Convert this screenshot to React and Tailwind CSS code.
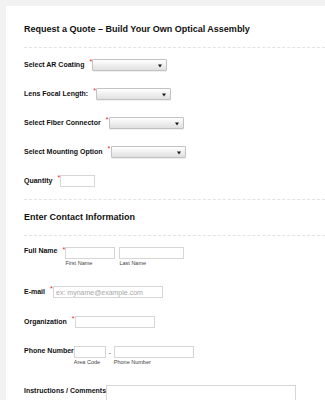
import React from "react";

const font = "font-['Liberation_Sans',Arial,sans-serif]";

function Star() {
  return (
    <span className="ml-[5px] self-start mt-[-1px] text-[7px] leading-[7px] text-[#e02020] w-[3px]">*</span>
  );
}

function Select({ w = "w-[75px]" }) {
  return (
    <div className={`${w} h-[12px] border border-[#c2c2c2] rounded-[1px] bg-gradient-to-b from-white to-[#e0e0e0] flex items-center justify-end pr-[4px] shadow-[0_1px_0_rgba(0,0,0,0.06)]`}>
      <svg width="4" height="4" viewBox="0 0 4 4" className="mt-[1px]">
        <path d="M0 0.5H4L2 3.5Z" fill="#1a1a1a" />
      </svg>
    </div>
  );
}

function Input({ w, placeholder }) {
  return (
    <div className={`${w} h-[12px] border border-[#d6d6d6] bg-white flex items-center pl-[2px]`}>
      {placeholder && (
        <span className="text-[7px] leading-[7px] text-[#a8a8a8] whitespace-nowrap">{placeholder}</span>
      )}
    </div>
  );
}

function Label({ children }) {
  return <span className="text-[7px] font-bold text-[#111] whitespace-nowrap leading-[12px]">{children}</span>;
}

function Divider() {
  return <div className="border-t border-dashed border-[#e2e2e2]" />;
}

export default function App() {
  return (
    <div className={`h-screen overflow-hidden bg-[#f2f2f2] pt-[6px] pl-[6px] ${font}`}>
      <div className="bg-white h-full pt-[17px] pl-[18px] overflow-hidden">
        <h1 className="text-[9px] font-bold leading-[12px] h-[12px] text-[#111] whitespace-nowrap">
          Request a Quote – Build Your Own Optical Assembly
        </h1>
        <div className="mt-[12px]">
          <Divider />
        </div>

        <div className="mt-[11px] flex flex-col gap-[17px]">
          <div className="flex items-center h-[12px]">
            <Label>Select AR Coating</Label>
            <Star />
            <Select />
          </div>
          <div className="flex items-center h-[12px]">
            <Label>Lens Focal Length:</Label>
            <Star />
            <Select />
          </div>
          <div className="flex items-center h-[12px]">
            <Label>Select Fiber Connector</Label>
            <Star />
            <Select />
          </div>
          <div className="flex items-center h-[12px]">
            <Label>Select Mounting Option</Label>
            <Star />
            <Select />
          </div>
          <div className="flex items-center h-[12px]">
            <Label>Quantity</Label>
            <Star />
            <Input w="w-[35px]" />
          </div>
        </div>

        <div className="mt-[12px]">
          <Divider />
        </div>
        <h2 className="mt-[11px] text-[9px] font-bold leading-[12px] h-[12px] text-[#111] whitespace-nowrap">
          Enter Contact Information
        </h2>
        <div className="mt-[12px]">
          <Divider />
        </div>

        <div className="mt-[11px] flex items-start">
          <span className="text-[7px] font-bold text-[#111] whitespace-nowrap leading-[8px]">Full Name</span>
          <Star />
          <div className="flex gap-[4px]">
            <div className="flex flex-col">
              <Input w="w-[50px]" />
              <span className="text-[5.5px] leading-[8px] text-[#444]">First Name</span>
            </div>
            <div className="flex flex-col">
              <Input w="w-[65px]" />
              <span className="text-[5.5px] leading-[8px] text-[#444]">Last Name</span>
            </div>
          </div>
        </div>

        <div className="mt-[19px] flex items-center h-[12px]">
          <Label>E-mail</Label>
          <Star />
          <Input w="w-[110px]" placeholder="ex: myname@example.com" />
        </div>

        <div className="mt-[18px] flex items-center h-[12px]">
          <Label>Organization</Label>
          <Star />
          <Input w="w-[80px]" />
        </div>

        <div className="mt-[18px] flex items-start">
          <span className="text-[7px] font-bold text-[#111] whitespace-nowrap leading-[9px]">Phone Number</span>
          <div className="flex items-start">
            <div className="flex flex-col">
              <Input w="w-[32px]" />
              <span className="text-[5.5px] leading-[8px] text-[#444]">Area Code</span>
            </div>
            <span className="w-[8px] text-center text-[7px] leading-[14px] text-[#555]">-</span>
            <div className="flex flex-col">
              <Input w="w-[80px]" />
              <span className="text-[5.5px] leading-[8px] text-[#444]">Phone Number</span>
            </div>
          </div>
        </div>

        <div className="mt-[19px] flex items-start">
          <span className="text-[7px] font-bold text-[#111] whitespace-nowrap leading-[9px] mt-[1px]">Instructions / Comments</span>
          <div className="w-[190px] h-[40px] border border-[#d6d6d6] bg-white" />
        </div>
      </div>
    </div>
  );
}
